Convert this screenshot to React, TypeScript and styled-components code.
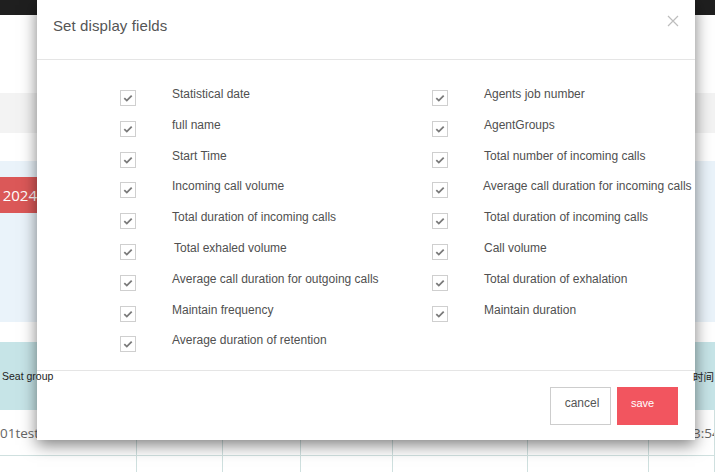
import React from "react";
import styled, { createGlobalStyle } from "styled-components";

const Global = createGlobalStyle`
  html, body { margin: 0; padding: 0; background: #fff; }
  body { width: 715px; height: 472px; overflow: hidden; font-family: "Liberation Sans", Arial, sans-serif; }
  #root { position: relative; width: 715px; height: 472px; overflow: hidden; }
`;

const Page = styled.div`
  display: flex;
  flex-direction: column;
  width: 715px;
  height: 472px;
  overflow: hidden;
`;

const TopBar = styled.div`
  height: 15px;
  background: #1f1f1f;
  flex: none;
`;

const Band = styled.div<{ $h: number; $bg: string }>`
  height: ${(p) => p.$h}px;
  background: ${(p) => p.$bg};
  flex: none;
`;

const BluePanel = styled.div`
  height: 161px;
  background: #eaf3fa;
  padding-top: 16px;
  box-sizing: border-box;
  flex: none;
`;

const YearTag = styled.div`
  width: 38px;
  height: 36px;
  background: #db5858;
  color: #fff;
  font-family: "Open Sans", sans-serif;
  font-size: 15px;
  line-height: 36px;
  text-align: right;
  box-sizing: border-box;
  padding-right: 1px;
`;

const Table = styled.div`
  display: grid;
  grid-template-columns: 137px 86px 78px 92px 135px 121px 66px;
  flex: none;
`;

const HeadCell = styled.div<{ $indent?: number }>`
  height: 68px;
  background: #c6e4e7;
  display: flex;
  align-items: center;
  padding-left: ${(p) => p.$indent ?? 2}px;
  font-size: 10.5px;
  color: #222;
  white-space: nowrap;
  box-sizing: border-box;
  font-family: "Liberation Sans", "Noto Sans CJK SC", sans-serif;
`;

/* the header captions are painted above the dialog in the reference */
const HeadText = styled.span`
  position: relative;
  z-index: 2;
`;

const Cell = styled.div<{ $h: number; $indent?: number }>`
  height: ${(p) => p.$h}px;
  border-right: 1px solid #cfe0df;
  border-bottom: 1px solid #cfe0df;
  box-sizing: border-box;
  display: flex;
  align-items: center;
  padding-left: ${(p) => p.$indent ?? 0}px;
  font-family: "Open Sans", sans-serif;
  font-size: 13.5px;
  color: #666;
  white-space: nowrap;
  overflow: hidden;
`;

const Modal = styled.div`
  position: absolute;
  left: 37px;
  top: 0;
  width: 658px;
  height: 440px;
  background: #fff;
  box-shadow: 0 5px 15px rgba(0, 0, 0, 0.5);
  display: flex;
  flex-direction: column;
`;

const Header = styled.div`
  height: 60px;
  border-bottom: 1px solid #e5e5e5;
  box-sizing: border-box;
  display: flex;
  align-items: center;
  justify-content: space-between;
  padding: 0 15px 8px 16px;
  flex: none;
`;

const Title = styled.div`
  font-size: 15px;
  color: #555;
  letter-spacing: 0.1px;
`;

const Close = styled.button`
  border: 0;
  background: none;
  padding: 0;
  width: 14px;
  height: 14px;
  display: flex;
  align-items: center;
  justify-content: center;
  margin-top: -10px;
  cursor: pointer;
`;

const Body = styled.div`
  height: 311px;
  box-sizing: border-box;
  border-bottom: 1px solid #e5e5e5;
  padding: 23px 0 0 83px;
  display: grid;
  grid-template-columns: 312px 1fr;
  grid-auto-rows: 30.8px;
  flex: none;
`;

const Item = styled.label`
  display: flex;
  align-items: flex-start;
  white-space: nowrap;
`;

const Box = styled.span`
  width: 16px;
  height: 16px;
  margin-top: 7px;
  border: 1px solid #cfcfcf;
  box-sizing: border-box;
  background: #fff;
  display: flex;
  align-items: center;
  justify-content: center;
  flex: none;
`;

const Label = styled.span<{ $shift?: number }>`
  margin-left: ${(p) => 36 + (p.$shift ?? 0)}px;
  margin-top: 4px;
  font-size: 12px;
  line-height: 15px;
  color: #505050;
`;

const Footer = styled.div`
  flex: 1;
  display: flex;
  justify-content: flex-end;
  align-items: flex-start;
  gap: 6px;
  padding: 16px 17px 0 0;
`;

const Button = styled.button<{ $primary?: boolean }>`
  width: 61px;
  height: 38px;
  border: 1px solid ${(p) => (p.$primary ? "#f2555f" : "#cdcdcd")};
  background: ${(p) => (p.$primary ? "#f2555f" : "#fff")};
  color: ${(p) => (p.$primary ? "#fff" : "#555")};
  font-family: "Liberation Sans", Arial, sans-serif;
  font-size: ${(p) => (p.$primary ? 11 : 12)}px;
  padding: 0 0 6px ${(p) => (p.$primary ? 13 : 3)}px;
  text-align: ${(p) => (p.$primary ? "left" : "center")};
  cursor: pointer;
`;

const Check = () => (
  <svg width="12" height="12" viewBox="0 0 12 12">
    <path d="M2.3 6.2 L4.8 8.6 L9.7 3.6" fill="none" stroke="#7a7a7a" strokeWidth="1.8" />
  </svg>
);

const left: [string, number?][] = [
  ["Statistical date"],
  ["full name"],
  ["Start Time"],
  ["Incoming call volume"],
  ["Total duration of incoming calls"],
  ["Total exhaled volume", 2],
  ["Average call duration for outgoing calls"],
  ["Maintain frequency"],
  ["Average duration of retention"],
];

const right: [string, number?][] = [
  ["Agents job number"],
  ["AgentGroups"],
  ["Total number of incoming calls"],
  ["Average call duration for incoming calls", -1],
  ["Total duration of incoming calls"],
  ["Call volume"],
  ["Total duration of exhalation"],
  ["Maintain duration"],
];

export default function App() {
  const cells: React.ReactNode[] = [];
  for (let i = 0; i < 9; i++) {
    const l = left[i];
    const r = right[i];
    cells.push(
      <Item key={"l" + i}>
        <Box>
          <Check />
        </Box>
        <Label $shift={l[1]}>{l[0]}</Label>
      </Item>
    );
    cells.push(
      r ? (
        <Item key={"r" + i}>
          <Box>
            <Check />
          </Box>
          <Label $shift={r[1]}>{r[0]}</Label>
        </Item>
      ) : (
        <span key={"r" + i} />
      )
    );
  }
  return (
    <>
      <Global />
      <Page>
        <TopBar />
        <Band $h={78} $bg="#fff" />
        <Band $h={40} $bg="#f3f3f3" />
        <Band $h={28} $bg="#fff" />
        <BluePanel>
          <YearTag>2024</YearTag>
        </BluePanel>
        <Band $h={20} $bg="#fff" />
        <Table>
          <HeadCell>
            <HeadText>Seat group</HeadText>
          </HeadCell>
          <HeadCell />
          <HeadCell />
          <HeadCell />
          <HeadCell />
          <HeadCell />
          <HeadCell $indent={44}>
            <HeadText>时间</HeadText>
          </HeadCell>
          <Cell $h={46}>01test</Cell>
          <Cell $h={46} />
          <Cell $h={46} />
          <Cell $h={46} />
          <Cell $h={46} />
          <Cell $h={46} />
          <Cell $h={46} $indent={44}>3:54</Cell>
          {Array.from({ length: 7 }).map((_, i) => (
            <Cell key={i} $h={40} />
          ))}
        </Table>
      </Page>
      <Modal>
        <Header>
          <Title>Set display fields</Title>
          <Close aria-label="close">
            <svg width="12" height="12" viewBox="0 0 12 12">
              <path d="M1 1 L11 11 M11 1 L1 11" stroke="#bdbdbd" strokeWidth="1.2" />
            </svg>
          </Close>
        </Header>
        <Body>{cells}</Body>
        <Footer>
          <Button>cancel</Button>
          <Button $primary>save</Button>
        </Footer>
      </Modal>
    </>
  );
}
